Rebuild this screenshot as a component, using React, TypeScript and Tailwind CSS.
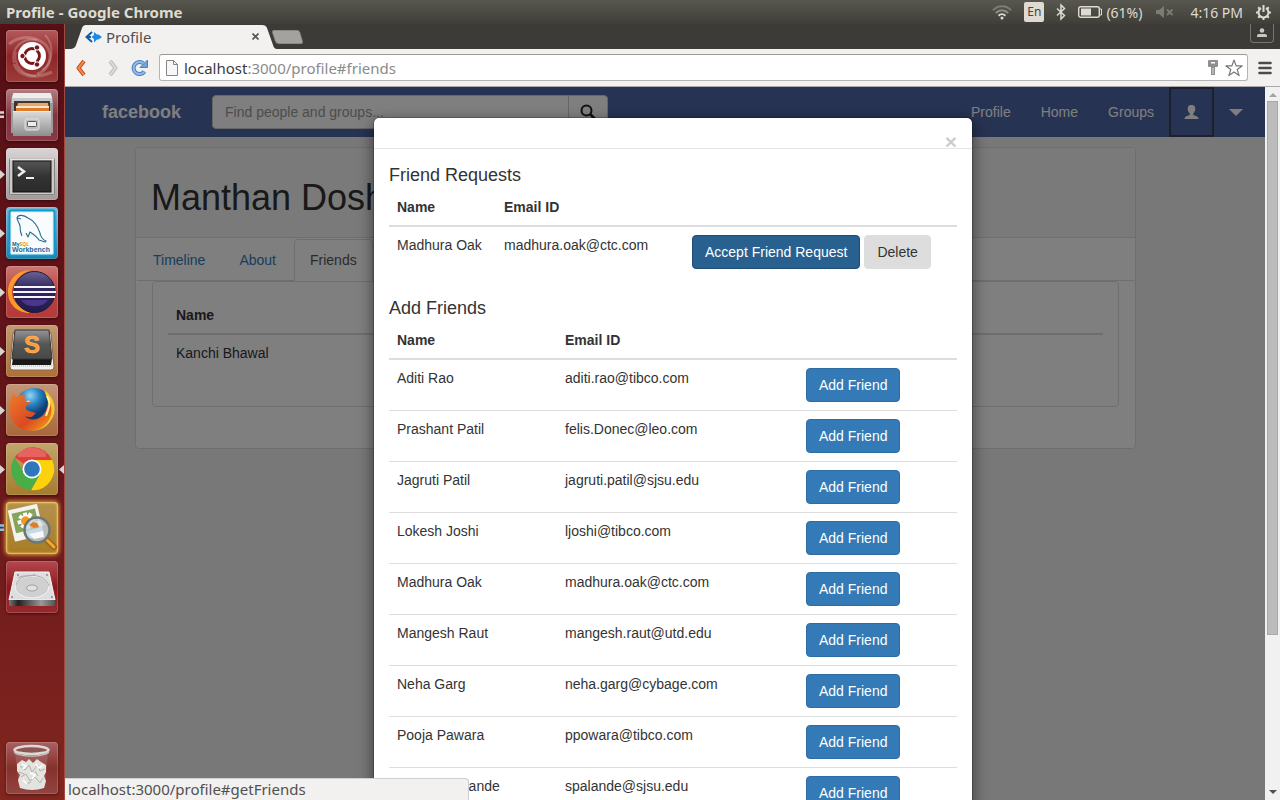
import type { ReactNode } from "react";

const people = [
  ["Aditi Rao", "aditi.rao@tibco.com"],
  ["Prashant Patil", "felis.Donec@leo.com"],
  ["Jagruti Patil", "jagruti.patil@sjsu.edu"],
  ["Lokesh Joshi", "ljoshi@tibco.com"],
  ["Madhura Oak", "madhura.oak@ctc.com"],
  ["Mangesh Raut", "mangesh.raut@utd.edu"],
  ["Neha Garg", "neha.garg@cybage.com"],
  ["Pooja Pawara", "ppowara@tibco.com"],
  ["Supriya Palande", "spalande@sjsu.edu"],
];

/* ---------- Desktop panel ---------- */

function TopPanel() {
  return (
    <header className="flex h-6 shrink-0 items-center justify-between bg-linear-to-b from-[#58574f] to-[#3f3e39] pr-2 pl-1.5 text-[14px] text-[#dfdbd2]">
      <span className="text-[15px] font-bold">Profile - Google Chrome</span>
      <div className="flex items-center gap-3">
        <svg width="20" height="16" viewBox="0 0 20 16" fill="none" strokeWidth="2">
          <path d="M1 6.2C6 .8 14 .8 19 6.2" stroke="#7d7b74" />
          <path d="M3.800 9C7.400 5.200 12.600 5.200 16.200 9" stroke="#8f8d85" />
          <path d="M6.600 11.700c2-2 4.800-2 6.800 0" stroke="#dfdbd2" />
          <circle cx="10" cy="14" r="1.500" fill="#dfdbd2" />
        </svg>
        <span className="flex h-5 w-5 items-center justify-center rounded-xs bg-[#dfdbd2] text-[12px] text-[#45443f]">En</span>
        <svg width="10" height="18" viewBox="0 0 10 18" fill="none" stroke="#dfdbd2" strokeWidth="1.500">
          <path d="M1 5.500l7.500 7L5 16V2l3.500 3.500-7.500 7" />
        </svg>
        <div className="flex items-center gap-1">
          <svg width="24" height="12" viewBox="0 0 24 12">
            <rect x=".7" y=".7" width="20.600" height="10.600" rx="2" fill="none" stroke="#dfdbd2" strokeWidth="1.400" />
            <rect x="3" y="2.500" width="10" height="7" fill="#dfdbd2" />
            <path d="M22 3h1.500v6H22" fill="none" stroke="#dfdbd2" />
          </svg>
          <span className="w-[38px]">(61%)</span>
        </div>
        <svg width="18" height="12" viewBox="0 0 18 12">
          <path d="M0 4h3l5-4v12L3 8H0z" fill="#7d7b74" />
          <path d="M11 3.500l5.500 5.500M16.500 3.500L11 9" stroke="#7d7b74" strokeWidth="1.800" />
        </svg>
        <span className="ml-1">4:16 PM</span>
        <svg width="17" height="17" viewBox="0 0 17 17" fill="none" stroke="#dfdbd2">
          <path d="M6 4.200a5 5 0 1 0 5 0" strokeWidth="2" />
          <path d="M8.500 1v7M1 8.500h2.500M13.500 8.500H16M3.200 3.200L5 5M12 5l1.800-1.800M3.200 13.800L5 12M12 12l1.800 1.800M8.500 13.500V16" strokeWidth="2" />
        </svg>
      </div>
    </header>
  );
}

/* ---------- Launcher ---------- */

function Tile({ label, tint, children, running, active, glow }: { label: string; tint: string; children: ReactNode; running?: "one" | "two" | "blue"; active?: boolean; glow?: boolean }) {
  return (
    <button aria-label={label} className={`relative h-[52px] w-[52px] rounded-[4px] ${tint} ${glow ? "shadow-[0_0_4px_1px_#e8a33c,inset_0_0_2px_1px_#f6cf72]" : "shadow-[inset_0_0_0_1px_rgba(255,255,255,0.16),0_1px_3px_rgba(0,0,0,0.45)]"}`}>
      <svg width="52" height="52" viewBox="0 0 52 52">{children}</svg>
      {running === "one" && (
        <svg className="absolute top-[22px] -left-1.5" width="5" height="9" viewBox="0 0 5 9"><path d="M0 0l5 4.500L0 9z" fill="#d8d4d4" /></svg>
      )}
      {(running === "two" || running === "blue") && (
        <svg className="absolute top-[22px] -left-1.5" width="5" height="8" viewBox="0 0 5 8"><path d="M0 1.500h4M0 5.800h4" stroke={running === "blue" ? "#7fc4ea" : "#d8d4d4"} strokeWidth="2.400" /></svg>
      )}
      {active && (
        <svg className="absolute top-[22px] -right-1.5" width="5" height="9" viewBox="0 0 5 9"><path d="M5 0L0 4.500 5 9z" fill="#d8d4d4" /></svg>
      )}
    </button>
  );
}

function Launcher() {
  return (
    <nav aria-label="Launcher" className="flex w-[65px] shrink-0 flex-col justify-between border-r border-[#a34a40] bg-linear-to-b from-[#560f15] via-[#65151a] to-[#82261f] px-1.5 py-1.5">
      <div className="flex flex-col gap-[7px]">
        <Tile label="Dash" tint="bg-linear-to-b from-[#b5595c] via-[#902326] to-[#9c3c38]">
          <g fill="none" stroke="#fff" strokeOpacity=".22">
            <path d="M3 14C18 2 42 8 44 25c0 11-6 17-13 19" strokeWidth="3" />
            <path d="M39 5c10 10 8 29-3 35M8 33C4 18 17 7 31 10M10 22c-3 13 7 24 20 24" strokeWidth="2" />
            <path d="M8 34c5 12 19 16 38 8" strokeWidth="3" />
          </g>
          <circle cx="26" cy="26" r="14" fill="#fff" />
          <circle cx="26" cy="26" r="7.400" fill="none" stroke="#78161a" strokeWidth="3" />
          <path d="M26 26H17M26 26l5-8.600M26 26l5 8.600" stroke="#fff" strokeWidth="1.500" />
          <circle cx="26" cy="26" r="5.600" fill="#fff" />
          <g fill="#78161a" stroke="#fff"><circle cx="16.500" cy="26" r="2.700" /><circle cx="31" cy="17.500" r="2.700" /><circle cx="31" cy="34.500" r="2.700" /></g>
        </Tile>
        <Tile label="Files" running="two" tint="bg-linear-to-b from-[#b57d83] via-[#82343e] to-[#8b3944]">
          <defs><linearGradient id="cab" x2="0" y2="1"><stop stopColor="#ddd" /><stop offset="1" stopColor="#8e8e8e" /></linearGradient></defs>
          <path d="M7 5q0-1 1-1h36q1 0 1 1l2 5v34H5V10z" fill="#9a9a9a" />
          <path d="M7 5q0-1 1-1h36q1 0 1 1l1 4H6z" fill="#ededed" />
          <path d="M6 9h40v5H6z" fill="#c8c8c8" />
          <path d="M8 12h36v11H8z" fill="#3d3634" />
          <path d="M12 14h30l1 8H10z" fill="#e9a765" />
          <path d="M10 17h33v2H10z" fill="#f8e5ce" /><path d="M10 19h33v4H10z" fill="#dd7b2b" />
          <path d="M7 22h38v25H7z" fill="url(#cab)" />
          <path d="M7 22.500h38" stroke="#eee" />
          <rect x="19" y="30" width="14" height="11" rx="2" fill="#bbb" stroke="#e5e5e5" />
          <rect x="21.500" y="32.500" width="9" height="5" rx="1" fill="#eee" stroke="#555" />
        </Tile>
        <Tile label="Terminal" running="one" tint="bg-linear-to-b from-[#dad4d5] to-[#a29a9d]">
          <defs><linearGradient id="scr" x2="0" y2="1"><stop stopColor="#555" /><stop offset=".5" stopColor="#333" /><stop offset="1" stopColor="#2b2b2b" /></linearGradient></defs>
          <rect x="3.500" y="10.500" width="45" height="36" rx="1" fill="#c9c9c7" stroke="#85817f" />
          <path d="M4 11h44" stroke="#fff" />
          <rect x="7" y="13" width="38" height="31" fill="url(#scr)" stroke="#111" />
          <path d="M12 19l6 4.500-6 4.500" fill="none" stroke="#eee" strokeWidth="2.500" />
          <path d="M20 30h8" stroke="#eee" strokeWidth="2" />
        </Tile>
        <Tile label="MySQL Workbench" running="one" tint="bg-linear-to-b from-[#79b6cf] to-[#217fa6]">
          <rect x="3.500" y="3.500" width="45" height="45" rx="2" fill="#e7f3f9" stroke="#0d9ad0" strokeWidth="2" />
          <rect x="6" y="6" width="40" height="40" fill="#f9fcfd" />
          <path d="M16 29c-1-2-2-6-2-10-1-4-3-6-3-8 1-4 7-3 11 0 7 3 10 9 12 15 0 3 3 7 6 8l-1 1-6-2c-2-3-6-6-9-8l-2 5-2-4M11 11l4 1" fill="none" stroke="#286c91" strokeWidth="1.100" strokeLinejoin="round" />
          <text x="6" y="39" fontSize="5" fontWeight="700" fill="#135a88">My<tspan fill="#f0971e">SQL</tspan></text>
          <text x="6" y="45" fontSize="7" fontWeight="700" fontFamily="Liberation Sans" fill="#1c6698">Workbench</text>
        </Tile>
        <Tile label="Eclipse" running="one" tint="bg-linear-to-b from-[#cc7772] via-[#b6413f] to-[#b33c3b]">
          <defs><linearGradient id="ecl" x2="0" y2="1"><stop stopColor="#6a6392" /><stop offset=".4" stopColor="#30285e" /><stop offset="1" stopColor="#211a4b" /></linearGradient></defs>
          <path d="M24 4C9 5 2 15 2 26s8 21 22 21C13 42 6 35 6 26S13 9 24 4z" fill="#fb9a28" />
          <circle cx="28.500" cy="26" r="20.500" fill="url(#ecl)" stroke="#1d1838" />
          <path d="M15 34h27a15 11 0 0 1-27 0z" fill="#4b368c" />
          <path d="M8 21h41M7 26h43M8 31h41" stroke="#f6f3ff" strokeWidth="2" />
        </Tile>
        <Tile label="Sublime Text" running="one" tint="bg-linear-to-b from-[#c19a74] to-[#ad7036]">
          <defs><linearGradient id="sub" x2="0" y2="1"><stop stopColor="#969696" /><stop offset=".5" stopColor="#555" /><stop offset="1" stopColor="#484848" /></linearGradient></defs>
          <path d="M7 8h38l3 34q0 3-3 3H7q-3 0-3-3z" fill="#f1f1ef" stroke="#876647" />
          <path d="M5 41h42" stroke="#b7b4ae" strokeDasharray="1 1" />
          <path d="M7 33h39l-1 7H6z" fill="#191919" />
          <path d="M9 5h34l3 29H6z" fill="url(#sub)" stroke="#333" />
          <text x="26" y="28" textAnchor="middle" fontSize="24" fontWeight="700" fontFamily="Liberation Sans" fill="#ff9d30" stroke="#ffc27c" strokeWidth=".5">S</text>
        </Tile>
        <Tile label="Firefox" running="one" tint="bg-linear-to-b from-[#c59679] to-[#a86739]">
          <defs>
            <radialGradient id="globe" cx=".4" cy=".2"><stop stopColor="#90d8f5" /><stop offset=".5" stopColor="#2882c0" /><stop offset="1" stopColor="#123a72" /></radialGradient>
            <linearGradient id="fox" x2="1" y2="1"><stop stopColor="#ee7d2c" /><stop offset=".6" stopColor="#db4a20" /><stop offset="1" stopColor="#f7a91e" /></linearGradient>
          </defs>
          <circle cx="28" cy="23" r="19" fill="url(#globe)" />
          <path d="M38 6c12 8 14 23 5 33-5 6-12 8-18 7 9-4 14-9 15-18l3 2c1-8-1-13-5-24z" fill="#f6c928" />
          <path d="M8 8c0 3 1 4 3 5 3-3 5-3 9-2-2 2-2 4 0 6h5c0 2-2 3-5 5-1 3 1 4 3 5l7 2-3 3c-3 2-5 1-8 0 4 5 13 5 19-2 3-4 4-10 4-15 5 8 4 15 1 21-8 15-33 14-38-3-3-9-1-18 3-25z" fill="url(#fox)" />
          <path d="M41 12c5 8 1 13-1 20" fill="none" stroke="#fff3a4" strokeWidth="2" />
          <path d="M20 18h5l-3-2z" fill="#f7c7a4" />
        </Tile>
        <Tile label="Google Chrome" running="one" active tint="bg-linear-to-b from-[#c1a66c] to-[#a67b2e]">
          <path d="M26 26L8.700 14.500A21 21 0 0 1 46 17z" fill="#e23c37" />
          <path d="M26 17h20a21 21 0 0 1-21 30l9-16z" fill="#fcd20c" />
          <path d="M8.700 14.500l9.500 16 7.800 5-1 11.500A21 21 0 0 1 8.700 14.500z" fill="#49ad48" />
          <path d="M25 47l9-16-8 2-5 3z" fill="#49ad48" />
          <path d="M12 10c8-7 20-7 28 0v4H12z" fill="#fff" opacity=".2" />
          <circle cx="26" cy="26" r="9.500" fill="#fff" /><circle cx="26" cy="26" r="7.800" fill="#2e77bb" />
        </Tile>
        <Tile label="Image Viewer" running="blue" glow tint="bg-linear-to-b from-[#b4924c] to-[#a87c25]">
          <g transform="rotate(-13 19 21)">
            <rect x="5" y="5" width="30" height="32" rx="1" fill="#f3f3ef" />
            <rect x="8" y="9" width="24" height="20" fill="#86a45a" />
            <g stroke="#fff" strokeWidth="4"><path d="M12 19h18M21 11v17M15 13l12 12M27 13L15 25" /></g>
            <circle cx="20" cy="19" r="4.500" fill="#ef9b1c" />
          </g>
          <path d="M41 38l7 7" stroke="#9f6410" strokeWidth="6" strokeLinecap="round" /><path d="M41 38l7 7" stroke="#efa83a" strokeWidth="3" strokeLinecap="round" />
          <circle cx="31" cy="28" r="12.500" fill="#bdd0e2" fillOpacity=".75" stroke="#6c7775" strokeWidth="2.500" />
          <path d="M22 25c3-7 12-9 17-2-5 2-11 0-17 2z" fill="#fff" opacity=".4" /><path d="M23 23l4-3 4 1 2 4-5 1z" fill="#df7c29" />
          <path d="M23 32l14-3 1 6-10 2z" fill="#f5f8fc" />
        </Tile>
        <Tile label="Disk" tint="bg-linear-to-b from-[#b4484f] via-[#8c171e] to-[#97292d]">
          <defs><linearGradient id="dsk"><stop stopColor="#777" /><stop offset=".2" stopColor="#222" /><stop offset=".7" stopColor="#999" /><stop offset="1" stopColor="#555" /></linearGradient></defs>
          <path d="M9 11h34l6 28H3z" fill="#dedede" stroke="#f6f6f6" />
          <ellipse cx="26" cy="26" rx="17" ry="11" fill="#d0d0d0" stroke="#f5f5f5" />
          <path d="M10 24c3-13 29-13 33 1M12 17c5-4 12 0 17-4" fill="none" stroke="#ababab" />
          <ellipse cx="26" cy="27" rx="5.500" ry="3" fill="#e1e1e1" stroke="#a0a0a0" />
          <path d="M3 39h46v5q0 1-2 1H5q-2 0-2-1z" fill="url(#dsk)" />
          <g fill="#888"><circle cx="12" cy="14" r="1" /><circle cx="41" cy="14" r="1" /><circle cx="6" cy="36" r="1" /><circle cx="46" cy="36" r="1" /></g>
        </Tile>
      </div>
      <Tile label="Trash" tint="bg-linear-to-b from-[#aa6060] via-[#862f2c] to-[#934541]">
        <path d="M9 10h33l-3 35q-13 5-26 0z" fill="#d7b5b2" opacity=".2" />
        <path d="M11 22l5-4 4 2 3-3 4 4 4-4 4 3 5 3v7l-2 4 2 5-2 7q-12 4-24 0l-2-8 2-5-3-4z" fill="#e3e3df" />
        <path d="M14 24l5 4 4-5 3 7 6-7 2 6 5-2M15 35l5-3 4 7 5-4 5 6 3-5M20 42l5-2M13 30l5 2M29 29l3 5" fill="none" stroke="#b2b1aa" />
        <path d="M16 22l4 2-3 3M30 22l3 4 4-3M24 31l5 2-3 4M17 38l4 4" fill="none" stroke="#fff" strokeWidth="1.500" />
        <ellipse cx="25.500" cy="8" rx="17" ry="4" fill="#8d5653" stroke="#d9d9d6" strokeWidth="2.500" />
        <path d="M8 9c5 6 30 6 35 0v2c-7 5-28 5-35 0z" fill="#c0c0bd" />
      </Tile>
    </nav>
  );
}

/* ---------- Browser chrome ---------- */

function TabStrip() {
  return (
    <div className="flex h-[25px] shrink-0 items-start justify-between bg-[#3c3b37] px-1.5">
      <div className="flex items-start">
        <div className="relative flex h-[25px] w-[202px] items-center">
          <svg className="absolute inset-0" width="206" height="25" viewBox="0 0 206 25">
            <path d="M0 25c3-1 4-1 5-4L11 4q1-3 4-3h176q4 0 5 3l6 17q1 4 4 4z" fill="#f2f1f0" />
          </svg>
          <div className="relative flex w-full items-center pr-2.5 pl-3.5">
            <svg width="17" height="12" viewBox="0 0 17 12">
              <path d="M7 1L1.500 6 7 11M1 6h5" fill="none" stroke="#155b9e" strokeWidth="2" />
              <path d="M9 1l3 2.500h1.500L17 6l-3.500 2.500H12L9 11.500V8L6.500 6 9 4z" fill="#198ae8" />
            </svg>
            <span className="ml-1 grow text-[15px] leading-5 text-[#505050]">Profile</span>
            <button aria-label="Close tab" className="p-1">
              <svg width="7" height="7" viewBox="0 0 7 7"><path d="M.5.5l6 6M6.500.5l-6 6" stroke="#555" strokeWidth="1.600" /></svg>
            </button>
          </div>
        </div>
        <button aria-label="New tab" className="mt-1.5 -ml-0.5">
          <svg width="32" height="14" viewBox="0 0 32 14"><path d="M3 0h23q2 0 3 2l3 10q0 2-2 2H8q-3 0-4-3L1 2q0-2 2-2z" fill="#a3a29f" stroke="#57554f" strokeWidth=".6" /></svg>
        </button>
      </div>
      <button aria-label="User" className="flex h-[19px] w-6 items-center justify-center rounded-b-[4px] border border-t-0 border-[#77756f]">
        <svg width="10" height="10" viewBox="0 0 10 10" fill="#c9c7c3"><circle cx="5" cy="2.500" r="2.300" /><path d="M0 9V7.500Q0 6 2 6h6q2 0 2 1.500V9z" /></svg>
      </button>
    </div>
  );
}

function Toolbar() {
  return (
    <div className="flex h-[38px] shrink-0 items-center border-b border-[#a9a8a6] bg-[#f2f1f0] pr-2 pl-2.5">
      <button aria-label="Back">
        <svg width="12" height="18" viewBox="0 0 12 18"><path d="M9 2L3.500 9 9 16" fill="none" stroke="#c9501d" strokeWidth="4" strokeLinejoin="round" /><path d="M9 2L3.500 9 9 16" fill="none" stroke="#f28a50" strokeWidth="2" /></svg>
      </button>
      <button aria-label="Forward" className="ml-5">
        <svg width="12" height="18" viewBox="0 0 12 18"><path d="M3 2l5.500 7L3 16" fill="none" stroke="#bfbebc" strokeWidth="4" strokeLinejoin="round" /><path d="M3 2l5.500 7L3 16" fill="none" stroke="#dcdbd9" strokeWidth="2" /></svg>
      </button>
      <button aria-label="Reload" className="ml-3">
        <svg width="18" height="18" viewBox="0 0 18 18"><path d="M13.500 12.500A6 6 0 1 1 12.500 4.500" fill="none" stroke="#4a82c0" strokeWidth="4" /><path d="M16.500 1v7.500H9z" fill="#6ea4dc" stroke="#4a82c0" /><path d="M13.500 12.500A6 6 0 1 1 12.500 4.500" fill="none" stroke="#8fbdea" strokeWidth="2" /></svg>
      </button>
      <div className="ml-2.5 flex h-[27px] grow items-center rounded-[3px] border border-[#b5b4b2] border-t-[#9a9997] bg-white pr-1 pl-1.5">
        <svg width="12" height="16" viewBox="0 0 12 16"><path d="M.5.5h7l4 4v11H.5z" fill="#f7f7f7" stroke="#858585" /><path d="M7.500.5v4h4" fill="none" stroke="#858585" /></svg>
        <div className="ml-1.5 grow text-[15px] leading-5 text-[#8a8a8a]"><span className="text-[#3b3b3b]">localhost</span>:3000/profile#friends</div>
        <svg width="12" height="16" viewBox="0 0 12 16"><path d="M2 0h8q1 0 1 1v5q0 1-1 1H8v8H4V7H2Q1 7 1 6V1q0-1 1-1z" fill="#8f8f8f" /><path d="M4 2h4v1.500H4z" fill="#fff" /><path d="M6 8v6" stroke="#ddd" /></svg>
        <button aria-label="Bookmark this page" className="ml-1.5">
          <svg width="18" height="18" viewBox="0 0 18 18"><path d="M9 1l2.100 5.900h6l-4.900 3.600 1.900 6.100L9 13l-5.100 3.600 1.900-6.100L.9 6.900h6z" fill="#fff" stroke="#777" strokeWidth="1.200" strokeLinejoin="round" /></svg>
        </button>
      </div>
      <button aria-label="Menu" className="ml-2.5">
        <svg width="14" height="14" viewBox="0 0 14 14"><path d="M1.500 2h11M1.500 7h11M1.500 12h11" stroke="#4b4b4b" strokeWidth="2.600" strokeLinecap="round" /></svg>
      </button>
    </div>
  );
}

/* ---------- Page ---------- */

function Navbar() {
  return (
    <nav className="flex h-[50px] items-center justify-between bg-[#4c66a4] pr-[7px] pl-[37px] text-white">
      <div className="flex items-center gap-[31px]">
        <a href="#home" className="text-[18px] leading-5 font-bold">facebook</a>
        <form className="flex">
          <input aria-label="Find people and groups" placeholder="Find people and groups..." className="h-[34px] w-[357px] rounded-l-[4px] border border-[#ccc] bg-white px-3 text-[14px] placeholder:text-[#999]" />
          <button type="button" aria-label="Search" className="-ml-px flex h-[34px] w-10 items-center justify-center rounded-r-[4px] border border-[#ccc] bg-white">
            <svg width="16" height="16" viewBox="0 0 16 16" fill="none" stroke="#222"><circle cx="6.500" cy="6.500" r="5" strokeWidth="2" /><path d="M10 10l5 5" strokeWidth="2.600" /></svg>
          </button>
        </form>
      </div>
      <div className="flex h-full items-center">
        <a href="#profile" className="px-[15px]">Profile</a>
        <a href="#home" className="px-[15px]">Home</a>
        <a href="#groups" className="px-[15px]">Groups</a>
        <button aria-label="Friend requests" className="flex h-full items-center justify-center border-2 border-[#3c4158] px-[13px]">
          <svg width="15" height="14" viewBox="0 0 15 14" fill="#fff"><path d="M7.500 0C10.500 0 11.300 2 11.300 4S10 7.500 9.200 8.500V10c2 .8 5.300 1.300 5.300 4H.5C.5 11.300 3.800 10.800 5.800 10V8.500C5 7.500 3.700 6.200 3.700 4S4.500 0 7.500 0z" /></svg>
        </button>
        <button aria-label="More" className="px-[15px]">
          <svg width="14" height="7" viewBox="0 0 14 7"><path d="M0 0h14L7 7z" fill="#fff" /></svg>
        </button>
      </div>
    </nav>
  );
}

function ProfilePanel() {
  return (
    <main className="mt-[10px] mr-[129px] ml-[70px] rounded-[4px] border border-[#ddd] bg-white pb-[41px]">
      <div className="rounded-t-[3px] border-b border-[#ddd] bg-[#f5f5f5] px-[15px] pt-[30px] pb-[19px]">
        <h1 className="text-[36px] leading-10">Manthan Doshi</h1>
      </div>
      <div className="mx-px mt-px flex gap-0.5 border-b border-[#ddd]">
        <a href="#timeline" className="-mb-px border border-transparent px-[15px] py-2.5 text-[#337ab7]">Timeline</a>
        <a href="#about" className="-mb-px border border-transparent px-[15px] py-2.5 text-[#337ab7]">About</a>
        <a href="#friends" className="-mb-px rounded-t-[4px] border border-[#ddd] border-b-white bg-white px-[15px] py-2.5 text-[#555]">Friends</a>
      </div>
      <div className="mx-4 h-[126px] rounded-[4px] border border-[#ddd] p-[15px]">
        <table className="w-full border-separate border-spacing-0 text-left">
          <thead><tr><th className="border-b-2 border-[#ddd] p-2 font-bold">Name</th></tr></thead>
          <tbody><tr><td className="p-2">Kanchi Bhawal</td></tr></tbody>
        </table>
      </div>
    </main>
  );
}

function FriendsModal() {
  return (
    <div role="dialog" aria-label="Friends" className="w-[600px] rounded-[6px] border border-black/20 bg-white bg-clip-padding pb-[15px] shadow-[0_5px_15px_rgba(0,0,0,0.5)]">
      <div className="flex h-[31px] items-end justify-end border-b border-[#e5e5e5] px-[15px]">
        <button aria-label="Close" className="text-[21px] leading-3 font-bold text-black opacity-20">×</button>
      </div>
      <div className="px-[15px] pt-4">
        <h4 className="mb-1 text-[18px] leading-5">Friend Requests</h4>
        <table className="w-full table-fixed border-separate border-spacing-0 text-left">
          <thead>
            <tr>
              <th className="w-[107px] border-b-2 border-[#ddd] p-2">Name</th>
              <th className="w-[188px] border-b-2 border-[#ddd] p-2">Email ID</th>
              <th aria-label="Actions" className="border-b-2 border-[#ddd] p-2" />
            </tr>
          </thead>
          <tbody>
            <tr className="align-top">
              <td className="p-2">Madhura Oak</td>
              <td className="p-2">madhura.oak@ctc.com</td>
              <td className="p-2">
                <div className="flex gap-1">
                  <button className="rounded-[4px] border border-[#204d74] bg-[#286090] px-3 py-1.5 leading-5 whitespace-nowrap text-white">Accept Friend Request</button>
                  <button className="rounded-[4px] border border-[#ddd] bg-[#ddd] px-3 py-1.5 leading-5">Delete</button>
                </div>
              </td>
            </tr>
          </tbody>
        </table>
        <h4 className="mt-[21px] mb-1 text-[18px] leading-5">Add Friends</h4>
        <table className="w-full table-fixed border-separate border-spacing-0 text-left">
          <thead>
            <tr>
              <th className="w-[168px] border-b-2 border-[#ddd] p-2">Name</th>
              <th className="w-[241px] border-b-2 border-[#ddd] p-2">Email ID</th>
              <th aria-label="Actions" className="border-b-2 border-[#ddd] p-2" />
            </tr>
          </thead>
          <tbody>
            {people.map(([name, email]) => (
              <tr key={email} className="align-top">
                <td className="border-b border-[#ddd] p-2">{name}</td>
                <td className="border-b border-[#ddd] p-2">{email}</td>
                <td className="border-b border-[#ddd] p-2">
                  <button className="block rounded-[4px] border border-[#2e6da4] bg-[#337ab7] px-3 py-1.5 leading-5 text-white">Add Friend</button>
                </td>
              </tr>
            ))}
          </tbody>
        </table>
      </div>
    </div>
  );
}

function Scrollbar() {
  return (
    <div className="flex w-[15px] shrink-0 flex-col items-center bg-[#f1f1f1] py-1.5">
      <svg width="8" height="4" viewBox="0 0 8 4"><path d="M4 0l4 4H0z" fill="#a3a3a3" /></svg>
      <div className="my-1 flex w-full grow flex-col px-0.5">
        <div className="h-[78%] border border-[#a8a8a8] bg-[#bcbcbc]" />
      </div>
      <svg width="8" height="4" viewBox="0 0 8 4"><path d="M0 0h8L4 4z" fill="#505050" /></svg>
    </div>
  );
}

export default function App() {
  return (
    <div className="flex h-screen flex-col overflow-hidden font-['Noto_Sans',sans-serif]">
      <TopPanel />
      <div className="flex min-h-0 grow">
        <Launcher />
        <div className="flex min-w-0 grow flex-col">
          <TabStrip />
          <Toolbar />
          <div className="relative flex min-h-0 grow">
            <div className="relative min-w-0 grow overflow-hidden bg-[#f1f1f3] font-['Liberation_Sans',Arial,sans-serif] text-[14px] leading-5 text-[#333]">
              <Navbar />
              <ProfilePanel />
              <div className="absolute inset-0 flex items-start justify-center overflow-hidden bg-black/50 pt-[30px] pl-4">
                <FriendsModal />
              </div>
            </div>
            <Scrollbar />
            <div className="absolute bottom-0 left-0 h-[22px] w-[404px] rounded-tr-[4px] border-t border-r border-[#d0cfcd] bg-[#f2f1f0] pl-[3px] text-[15px] leading-5 text-[#505050]">localhost:3000/profile#getFriends</div>
          </div>
        </div>
      </div>
    </div>
  );
}
